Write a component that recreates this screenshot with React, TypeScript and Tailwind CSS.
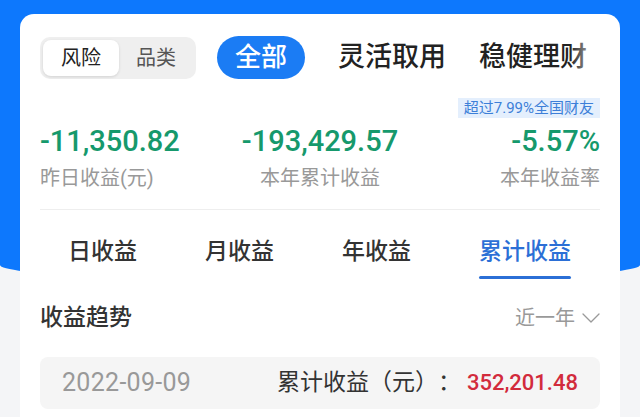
import React from "react";

const tabs = ["日收益", "月收益", "年收益", "累计收益"];

export default function App() {
  return (
    <div
      className="relative h-[417px] w-[640px] overflow-hidden bg-[#f4f5f7] [text-spacing-trim:space-all]"
      style={{ fontFamily: "Roboto, 'Noto Sans CJK SC', sans-serif" }}
    >
      <div className="absolute inset-x-0 top-0 h-[282px] rounded-b-[320px_17px] bg-[#0d78fd]" />
      <div className="relative mx-5 mt-[14px] h-[403px] rounded-t-[14px] bg-white px-5 pt-[22px]">
        {/* top category row */}
        <div className="relative flex items-center overflow-hidden">
          <div className="flex h-[42px] w-[156px] shrink-0 items-center rounded-[10px] bg-[#efefef] p-[3px]">
            <div className="flex h-[36px] w-[76px] items-center justify-center rounded-[8px] bg-white text-[20px] text-[#222] shadow-[0_1px_3px_rgba(0,0,0,0.12)]">
              风险
            </div>
            <div className="flex flex-1 items-center justify-center text-[20px] text-[#555]">
              品类
            </div>
          </div>
          <div className="ml-[21px] flex h-[43px] shrink-0 items-center rounded-full bg-[#1b7cf4] px-[18px] text-[26px] font-medium text-white">
            全部
          </div>
          <div className="ml-[33px] shrink-0 whitespace-nowrap text-[27px] font-medium text-[#222]">
            灵活取用
          </div>
          <div className="ml-[33px] shrink-0 whitespace-nowrap text-[27px] font-medium text-[#222]">
            稳健理财
          </div>
          <div className="pointer-events-none absolute right-0 top-0 h-full w-[30px] bg-gradient-to-r from-white/0 to-white/85" />
        </div>

        {/* figures */}
        <div className="mt-[19px] grid grid-cols-3 items-end">
          <div className="flex flex-col items-start">
            <div className="text-[29px] font-medium leading-[34px] text-[#16996c]">-11,350.82</div>
            <div className="mt-[6px] text-[20px] leading-[28px] text-[#999]">昨日收益(元)</div>
          </div>
          <div className="flex flex-col items-center">
            <div className="text-[29px] font-medium leading-[34px] text-[#16996c]">-193,429.57</div>
            <div className="mt-[6px] text-[20px] leading-[28px] text-[#999]">本年累计收益</div>
          </div>
          <div className="flex flex-col items-end">
            <div className="flex h-[20px] items-center bg-[#e4effd] px-[6px] text-[15px] leading-[20px] text-[#3d7fd8]">
              超过7.99%全国财友
            </div>
            <div className="mt-[6px] text-[29px] font-medium leading-[34px] text-[#16996c]">-5.57%</div>
            <div className="mt-[6px] text-[20px] leading-[28px] text-[#999]">本年收益率</div>
          </div>
        </div>

        <div className="mt-[17px] h-px bg-[#eeeeee]" />

        {/* period tabs */}
        <div className="mt-[26px] flex items-start gap-[68px] pl-[28px]">
          {tabs.map((t, i) => (
            <div key={t} className="flex flex-col items-stretch">
              <div
                className={
                  i === 3
                    ? "text-[23px] font-medium leading-[32px] text-[#2b6fd6]"
                    : "text-[23px] font-medium leading-[32px] text-[#333]"
                }
              >
                {t}
              </div>
              {i === 3 && <div className="mt-[8px] h-[3px] rounded-full bg-[#2b6fd6]" />}
            </div>
          ))}
        </div>

        {/* trend header */}
        <div className="mt-[23px] flex h-[32px] items-center justify-between">
          <div className="text-[23px] font-medium leading-[32px] text-[#333]">收益趋势</div>
          <div className="flex items-center">
            <span className="text-[20px] text-[#999]">近一年</span>
            <svg
              className="ml-[7px]"
              width="18"
              height="10"
              viewBox="0 0 18 10"
              fill="none"
              stroke="#9a9a9a"
              strokeWidth="1.3"
              strokeLinecap="round"
              strokeLinejoin="round"
            >
              <path d="M1 1 L9 9 L17 1" />
            </svg>
          </div>
        </div>

        {/* date row */}
        <div className="mt-[23px] flex h-[52px] items-center justify-between rounded-[8px] bg-[#f5f5f5] px-[22px]">
          <div className="text-[25px] tracking-[0.3px] text-[#999]">2022-09-09</div>
          <div className="whitespace-nowrap">
            <span className="text-[23px] text-[#333]">累计收益（元）：</span>
            <span className="ml-[6px] text-[22px] font-medium text-[#d22b3c]">352,201.48</span>
          </div>
        </div>
      </div>
    </div>
  );
}
